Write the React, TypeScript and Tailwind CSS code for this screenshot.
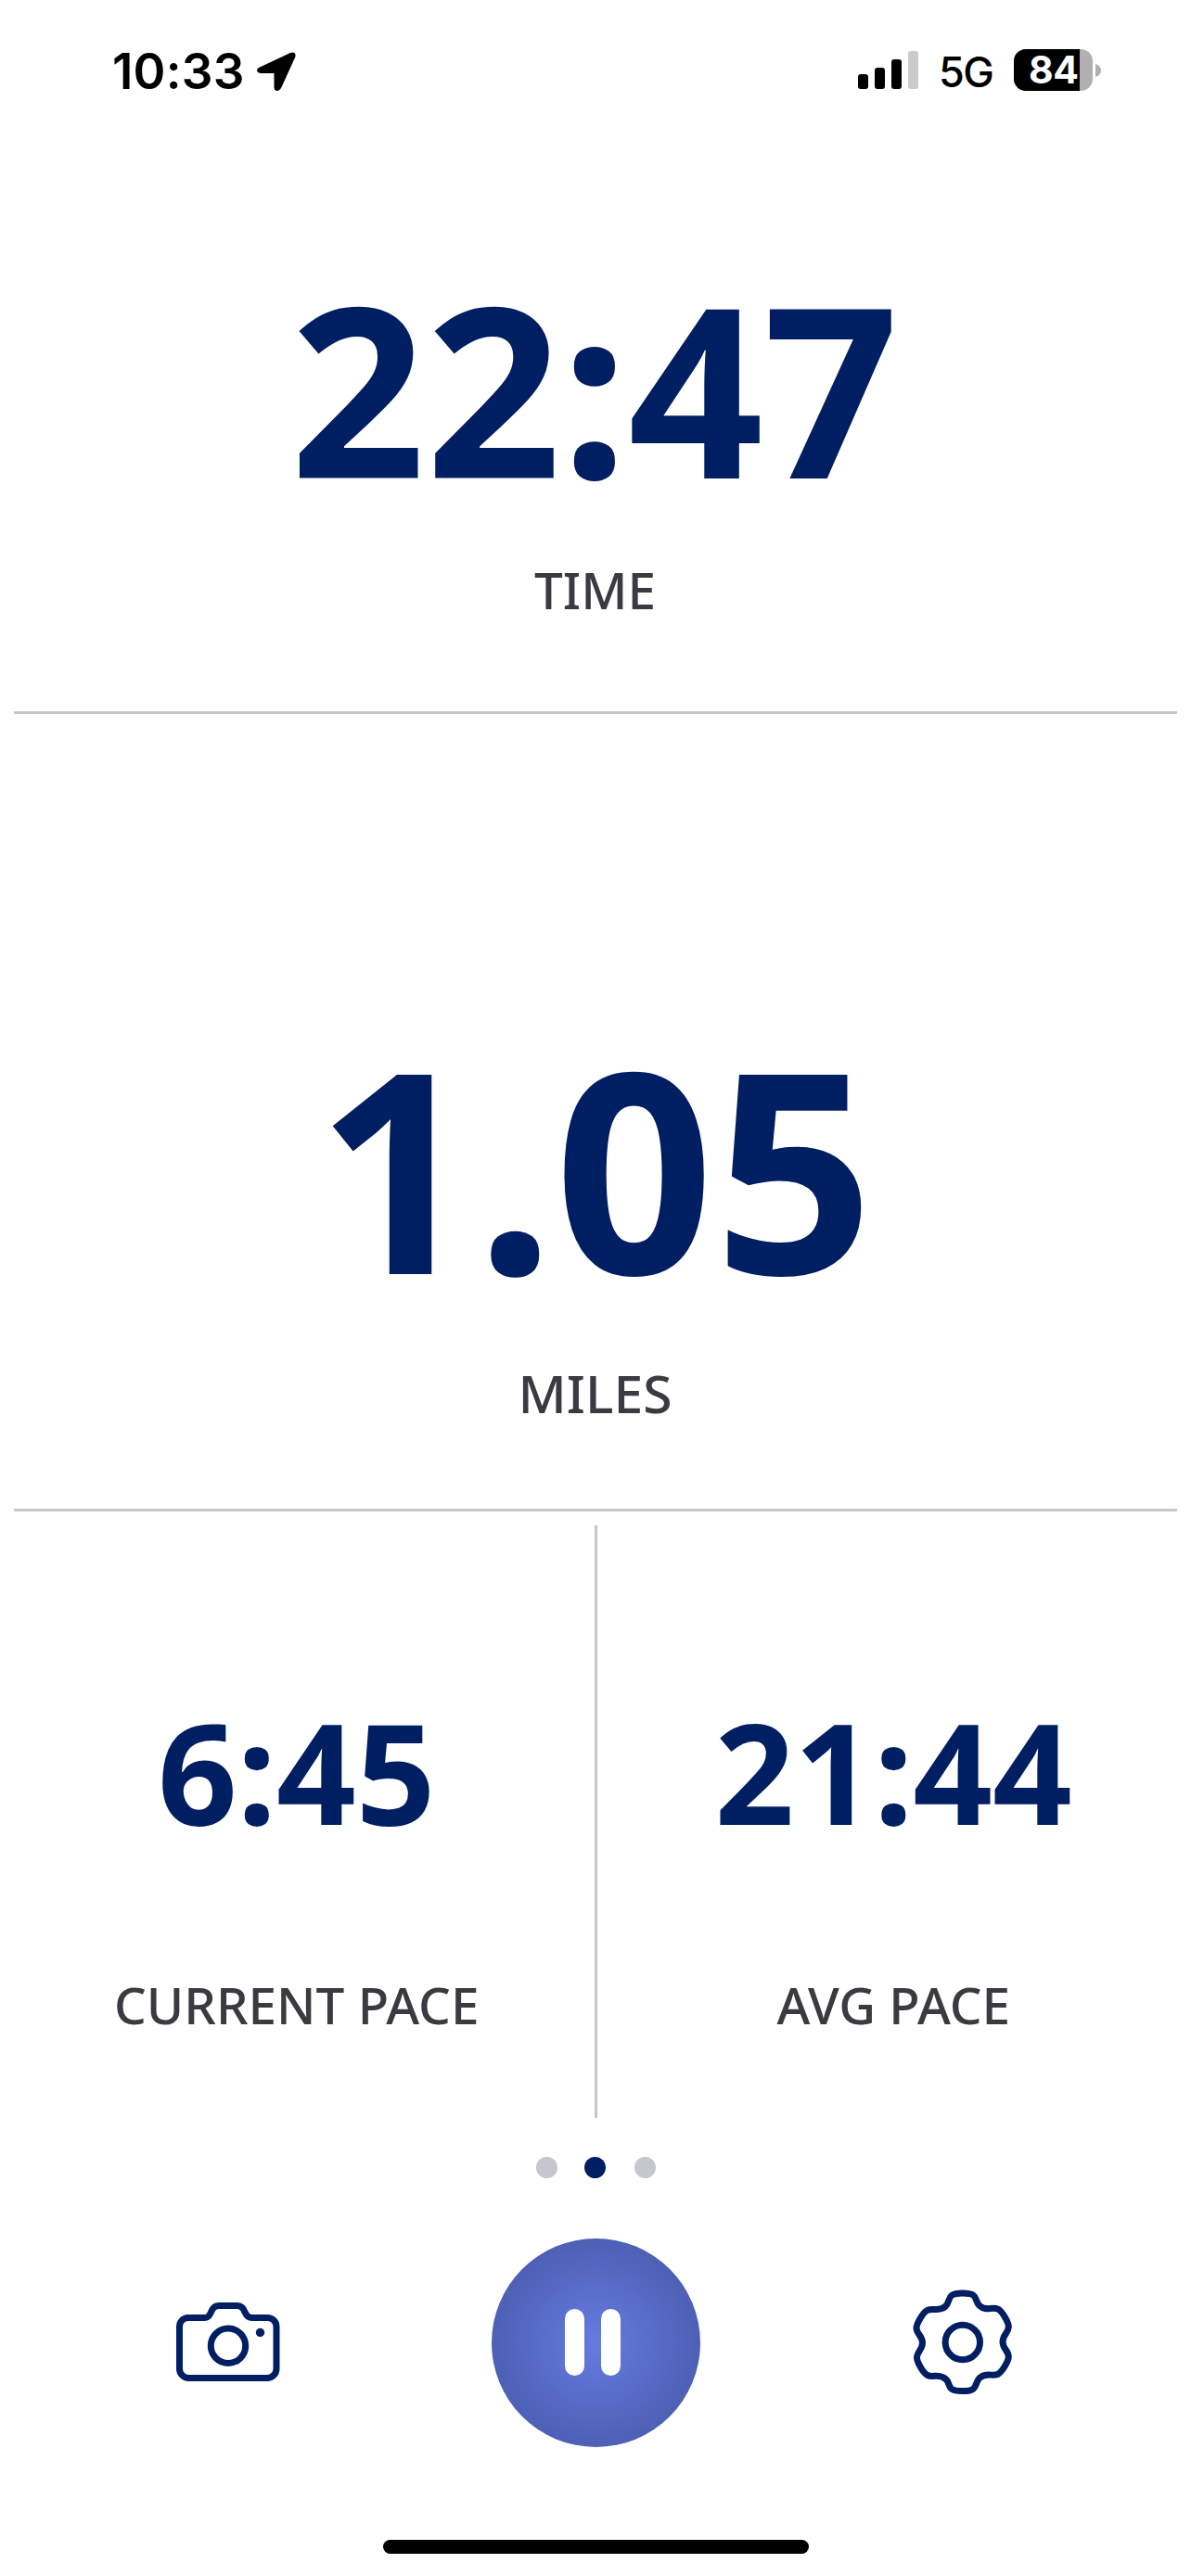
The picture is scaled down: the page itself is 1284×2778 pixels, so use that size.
import React from "react";

const LABEL = "text-[54.8px] leading-[55px] font-medium text-[#3a3a40]";
const VALUE = "font-bold text-[#001e62]";

function StatusBar() {
  return (
    <header className="flex h-[150px] items-start justify-between pl-[121px] pr-[97px] font-['Inter'] text-black">
      <div className="flex items-start pt-[51px]">
        <span className="w-[156px] whitespace-nowrap text-[53px] leading-[52px] font-semibold tracking-[0.2px]">10:33</span>
        <svg className="mt-[5px] h-[42px] w-[42px]" viewBox="0 0 42 42">
          <path
            d="M3 16.5 L36 1 Q42-1 41.5 5 L26.5 38 Q24.500 42 21.500 42 Q18.500 41.500 18.500 38 V23 H4 Q0 22.500 0 19.500 Q0 17.500 3 16.500Z"
            fill="#000"
          />
        </svg>
      </div>
      <div className="flex items-start pt-[53px]">
        <div className="mt-[2px] flex h-[41px] items-end gap-[7px]">
          <div className="h-[16px] w-[11px] rounded-[3px] bg-black" />
          <div className="h-[23px] w-[11px] rounded-[3px] bg-black" />
          <div className="h-[32px] w-[11px] rounded-[3px] bg-black" />
          <div className="h-[41px] w-[11px] rounded-[3px] bg-[#cbcbcb]" />
        </div>
        <span className="ml-[22px] w-[81px] whitespace-nowrap text-[45px] leading-[50px] font-medium tracking-[-1.5px]">5G</span>
        <div className="flex h-[45px] w-[85px] rounded-[13px] bg-[#b0b0b0]">
          <div className="h-[45px] w-[71px] rounded-l-[13px] bg-black pl-[16px] text-[41px] leading-[45px] font-bold tracking-[-0.5px] text-white">84</div>
        </div>
        <svg className="mt-[16px] ml-[3px] h-[14px] w-[6px]" viewBox="0 0 6 14">
          <path d="M0 0 Q6 2 6 7 Q6 12 0 14Z" fill="#b0b0b0" />
        </svg>
      </div>
    </header>
  );
}

function CameraIcon() {
  return (
    <svg className="h-[130px] w-[150px]" viewBox="0 0 150 130" fill="none" stroke="#001e62" strokeWidth="7">
      <path d="M32.500 39.500 H50 C60 39.500 55 26.500 66.500 26.500 H85 C96.500 26.500 91.500 39.500 102 39.500 H118.500 A9.500 9.500 0 0 1 128 49 V94.500 A10 10 0 0 1 118 104.500 H33.500 A10 10 0 0 1 23.500 94.500 V49 A9.500 9.500 0 0 1 32.500 39.500Z" />
      <circle cx="76" cy="69.700" r="18.700" />
      <circle cx="110.500" cy="55.500" r="4.700" fill="#001e62" stroke="none" />
    </svg>
  );
}

function GearIcon() {
  return (
    <svg className="h-[150px] w-[150px]" viewBox="0 0 150 150" fill="none" stroke="#001e62" strokeWidth="7">
      <path d="M77.500 23 C96 23 89.500 30 96 36.500 C103 43 109 37.500 115.500 40 C120.500 42 127.500 55 127.300 59.500 C127 66 121 68 121 75.500 C121 83 127.300 85 127.300 91.500 C127.300 96 120.500 108 115.500 110.500 C109 113 103 108 96 114.500 C89.500 121 96 128.500 77.500 128.500 C59 128.500 66 121 59.500 115.500 C52 109 46 114.500 40 111.500 C35 109 28.500 97 28.500 92.500 C28.500 86 34.500 84 34.500 76.500 C34.500 69 28 67 28 60.500 C28 56 35 44 39.500 41.500 C46 38.500 52 43.500 59 37.500 C66 31 59 23 77.500 23Z" />
      <circle cx="77.800" cy="76" r="18.700" />
    </svg>
  );
}

function Metric({ value, label }: { value: string; label: string }) {
  return (
    <div className="flex flex-1 flex-col items-center pt-[190px] pr-[1px]">
      <div className={`${VALUE} text-[150px] leading-[150px]`}>{value}</div>
      <div className={`${LABEL} mt-[149px] whitespace-nowrap`}>{label}</div>
    </div>
  );
}

export default function App() {
  return (
    <div className="flex h-[2778px] w-[1284px] flex-col overflow-hidden bg-white font-['Noto_Sans',sans-serif]">
      <StatusBar />
      <main>
        <section className="mx-[15px] flex h-[620px] flex-col items-center border-b-[3px] border-[#c6c6ce] pt-[140px]">
          <div className={`${VALUE} pr-[2px] text-[255.5px] leading-[255px]`}>22:47</div>
          <div className={`${LABEL} mt-[63px] pr-[1px]`}>TIME</div>
        </section>
        <section className="mx-[15px] flex h-[860px] flex-col items-center border-b-[3px] border-[#c6c6ce] pt-[337px]">
          <div className={`${VALUE} pr-[1px] text-[301px] leading-[301px]`}>1.05</div>
          <div className="mt-[66px] pr-[1px] text-[57px] leading-[57px] font-medium text-[#3a3a40]">MILES</div>
        </section>
        <section className="mt-[15px] flex h-[639px]">
          <Metric value="6:45" label="CURRENT PACE" />
          <div className="h-[639px] w-[3px] bg-[#c6c6ce]" />
          <Metric value="21:44" label="AVG PACE" />
        </section>
      </main>
      <nav className="mt-[42px] flex h-[23px] pl-[578px]">
        <span className="h-[23px] w-[23px] rounded-full bg-[#c6c6ce]" />
        <span className="ml-[29px] h-[23px] w-[23px] rounded-full bg-[#001e62]" />
        <span className="ml-[31px] h-[23px] w-[23px] rounded-full bg-[#c6c6ce]" />
      </nav>
      <div className="mt-[65px] flex h-[225px] items-center pl-[170px]">
        <button className="mt-[-3px]" aria-label="Camera"><CameraIcon /></button>
        <button
          aria-label="Pause"
          className="ml-[210px] flex h-[225px] w-[225px] items-center gap-[18px] rounded-full bg-[radial-gradient(circle_closest-side,#657be0_0%,#4d60b5_100%)] pl-[79px] pb-[2px]"
        >
          <span className="h-[72px] w-[21px] rounded-full bg-white" />
          <span className="h-[72px] w-[21px] rounded-full bg-white" />
        </button>
        <button className="mt-[-3px] ml-[205px]" aria-label="Settings"><GearIcon /></button>
      </div>
      <div className="mx-auto mt-[100px] h-[15px] w-[459px] rounded-full bg-black" />
    </div>
  );
}
